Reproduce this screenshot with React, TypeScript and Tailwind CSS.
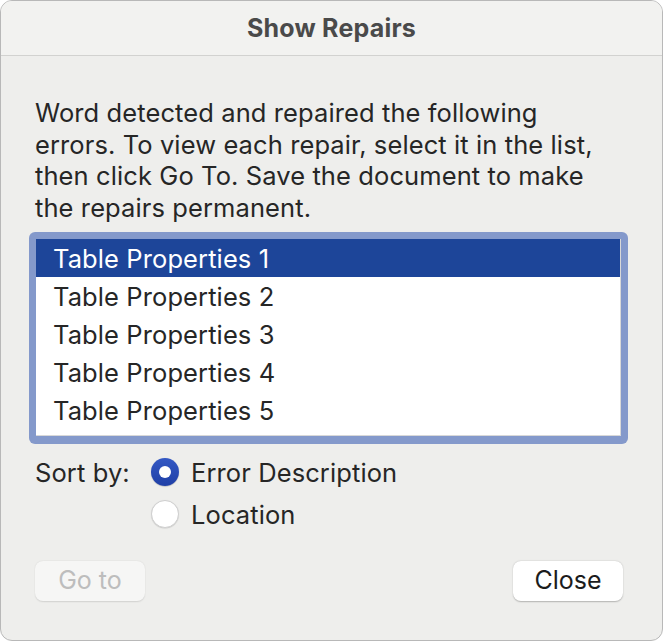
import { useState } from "react"

const rows = [
	"Table Properties 1",
	"Table Properties 2",
	"Table Properties 3",
	"Table Properties 4",
	"Table Properties 5",
]

function Radio({ checked }: { checked: boolean }) {
	if (checked) {
		return (
			<span className="w-[28px] h-[28px] rounded-full bg-gradient-to-b from-[#3358c4] to-[#1f3fa6] flex items-center justify-center shadow-[0_0.5px_1px_rgba(0,0,0,0.3)]">
				<span className="w-[12px] h-[12px] rounded-full bg-white" />
			</span>
		)
	}
	return (
		<span className="w-[28px] h-[28px] rounded-full bg-white border border-[#cfcfcf] shadow-[0_0.5px_1px_rgba(0,0,0,0.15)]" />
	)
}

export default function App() {
	const [selected, setSelected] = useState(0)
	const [sort, setSort] = useState("error")

	return (
		<div
			className="w-[663px] h-[641px] bg-white"
			style={{ fontFamily: "Inter, 'Noto Sans', sans-serif" }}
		>
			<div className="h-full flex flex-col bg-[#eeeeec] rounded-[12px] border border-[#b8b8b8] overflow-hidden">
				<div className="h-[55px] shrink-0 flex items-center justify-center bg-[#f2f2f0] border-b border-[#d2d2d0]">
					<span className="text-[25px] font-bold text-[#4a4a4a] tracking-[0.2px] pt-[1px]">
						Show Repairs
					</span>
				</div>

				<div className="flex flex-col px-[34px] pt-[41px]">
					<p className="w-[595px] whitespace-nowrap text-[25.5px] leading-[31.5px] text-[#262626] tracking-[0.1px]">
						Word detected and repaired the following
						<br />
						errors. To view each repair, select it in the list,
						<br />
						then click Go To. Save the document to make
						<br />
						the repairs permanent.
					</p>

					<div className="mt-[9px] -ml-[6px] w-[599px] h-[212px] rounded-[6px] bg-[#8499cb] pt-[7px] px-[7px] pb-[8px]">
						<div className="h-full bg-white border-r border-b border-[#d8d8d8]">
							{rows.map((r, i) => (
								<div
									key={r}
									onClick={() => setSelected(i)}
									className={
										i === selected
											? "h-[38px] flex items-center pl-[17px] pt-[2px] bg-[#1d4599] text-white text-[25.5px] tracking-[0.1px]"
											: "h-[38px] flex items-center pl-[17px] pt-[2px] text-[#262626] text-[25.5px] tracking-[0.1px]"
									}
								>
									{r}
								</div>
							))}
						</div>
					</div>

					<div className="mt-[13px] grid grid-cols-[116px_1fr] gap-y-[12px] text-[25.5px] tracking-[0.1px] text-[#262626]">
						<span className="h-[30px] flex items-center pt-[2px]">Sort by:</span>
						<button
							className="flex items-center gap-[12px] h-[30px]"
							onClick={() => setSort("error")}
						>
							<Radio checked={sort === "error"} />
							<span className="pt-[2px]">Error Description</span>
						</button>
						<span />
						<button
							className="flex items-center gap-[12px] h-[30px]"
							onClick={() => setSort("location")}
						>
							<Radio checked={sort === "location"} />
							<span className="pt-[2px]">Location</span>
						</button>
					</div>

					<div className="mt-[32px] flex justify-between pr-[5px]">
						<button className="w-[110px] h-[40px] rounded-[8px] bg-[#f6f6f5] text-[#bdbdbd] text-[25px] shadow-[0_0.5px_1.5px_rgba(0,0,0,0.12)]">
							Go to
						</button>
						<button className="w-[110px] h-[40px] rounded-[8px] bg-white text-[#1c1c1c] text-[25px] shadow-[0_0.5px_1.5px_rgba(0,0,0,0.25)]">
							Close
						</button>
					</div>
				</div>
			</div>
		</div>
	)
}
